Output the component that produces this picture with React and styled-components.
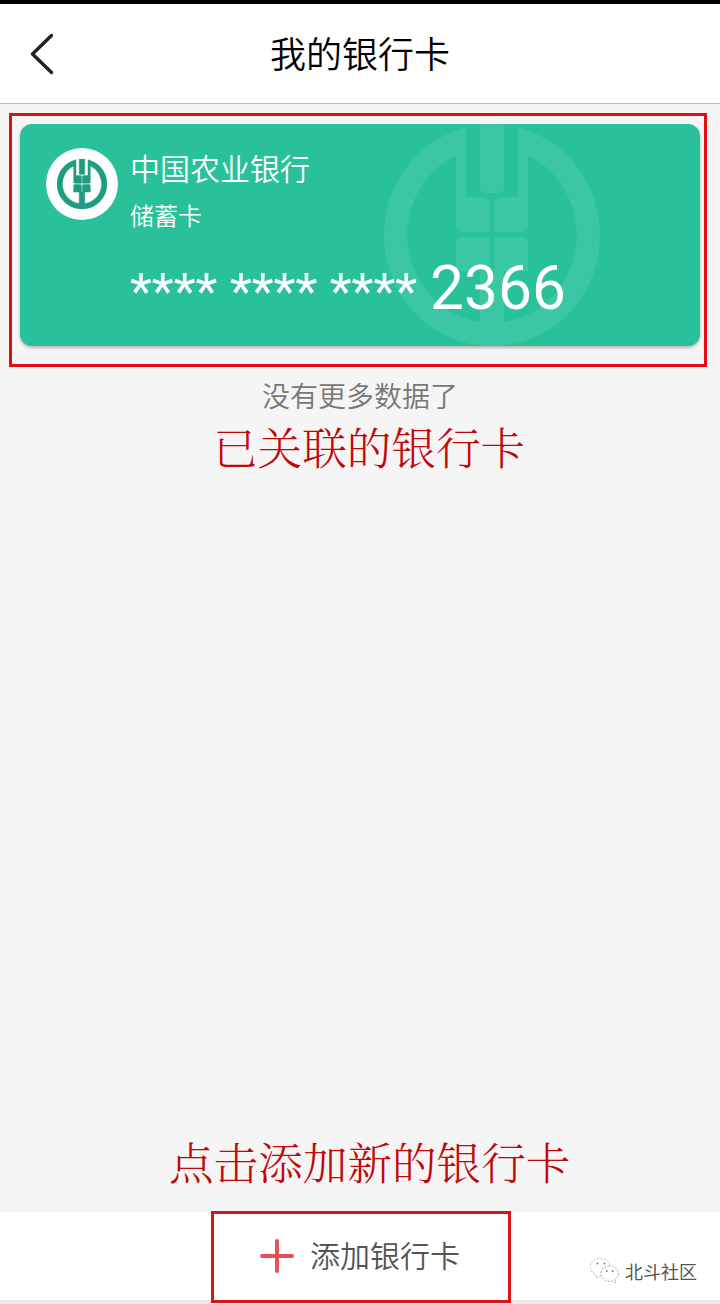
import React from "react";
import styled, { createGlobalStyle } from "styled-components";

const addLabel = "添加银行卡";

const cards = [
  {
    id: 1,
    bank: "中国农业银行",
    type: "储蓄卡",
    mask: "**** **** ****",
    last: "2366",
  },
];

const BackIcon = () => (
  <svg width="24" height="42" viewBox="0 0 24 42" fill="none">
    <path
      d="M21.5 2.5L2.5 21L21.5 39.5"
      stroke="#222"
      strokeWidth="3.4"
      strokeLinecap="round"
      strokeLinejoin="round"
    />
  </svg>
);

const PlusIcon = () => (
  <svg width="34" height="34" viewBox="0 0 34 34" fill="none">
    <path
      d="M17 2V32M2 17H32"
      stroke="#e5505a"
      strokeWidth="4"
      strokeLinecap="round"
    />
  </svg>
);

// 216 x 222, the wheat ear inside a ring
const BankMark = ({ className }) => (
  <svg
    className={className}
    viewBox="0 0 216 222"
    preserveAspectRatio="none"
    fill="currentColor"
  >
    <path d="M82 3.4A108 111 0 1 0 134 3.4V73H118Q110 73 110 79V108H138Q144 108 144 103V31.5A85.5 88 0 0 1 120 198V147H144V118Q144 113 138 113H114Q110 113 110 117V147H106V117Q106 113 102 113H78Q72 113 72 118V147H96V198A85.5 88 0 0 1 72 31.5V103Q72 108 78 108H106V79Q106 73 98 73H82Z" />
    <path d="M96 0H120V64Q120 69 115 69H101Q96 69 96 64Z" />
  </svg>
);

const WechatIcon = () => (
  <svg width="30" height="26" viewBox="0 0 30 26" fill="none">
    <g stroke="#9a9a9a" strokeWidth="0.9" strokeDasharray="2 1.4">
      <path d="M11 18L6 20V16.5A10 8.5 0 1 1 20 7.5" strokeOpacity="0.75" />
      <path d="M19.5 8A8.5 7.7 0 1 0 22 23L26 24.5L25.5 21.5A8.5 7.7 0 0 0 19.5 8Z" />
    </g>
    <g fill="#777">
      <circle cx="7.5" cy="5.5" r="0.9" />
      <circle cx="14.5" cy="5.5" r="0.9" />
      <circle cx="16.8" cy="13" r="0.9" />
      <circle cx="22.8" cy="13" r="0.9" />
    </g>
  </svg>
);

const BankCard = ({ bank, type, mask, last }) => (
  <Card>
    <Watermark />
    <Badge>
      <BadgeMark />
    </Badge>
    <Info>
      <BankName>{bank}</BankName>
      <CardType>{type}</CardType>
      <CardNumber>
        <Mask>{mask}</Mask>
        <Last>{last}</Last>
      </CardNumber>
    </Info>
  </Card>
);

const App = () => {
  return (
    <Page>
      <GlobalStyle />
      <StatusBar />
      <Header>
        <BackButton aria-label="返回">
          <BackIcon />
        </BackButton>
        <Title>我的银行卡</Title>
      </Header>
      <Content>
        <Highlight>
          {cards.map((card) => (
            <BankCard key={card.id} {...card} />
          ))}
        </Highlight>
        <NoMore>没有更多数据了</NoMore>
        <Note $left={213}>已关联的银行卡</Note>
        <Spacer />
        <Note $left={169} $bottom>
          点击添加新的银行卡
        </Note>
      </Content>
      <Footer>
        <AddButton>
          <PlusIcon />
          <AddLabel>{addLabel}</AddLabel>
        </AddButton>
        <Account>
          <WechatIcon />
          北斗社区
        </Account>
      </Footer>
    </Page>
  );
};

const GlobalStyle = createGlobalStyle`
  * {
    box-sizing: border-box;
  }
  body {
    margin: 0;
    background: #f5f5f5;
    font-family: Roboto, "Noto Sans CJK SC", sans-serif;
  }
  button {
    border: none;
    padding: 0;
    background: none;
    font: inherit;
  }
  h1, p {
    margin: 0;
    font-weight: 350;
  }
  svg {
    display: block;
    flex-shrink: 0;
  }
`;

const Page = styled.div`
  width: 720px;
  height: 1304px;
  display: flex;
  flex-direction: column;
  overflow: hidden;
  background: #f5f5f5;
`;

const StatusBar = styled.div`
  height: 4px;
  background: #000;
`;

const Header = styled.header`
  height: 100px;
  display: grid;
  grid-template-columns: 90px 1fr 90px;
  align-items: center;
  background: #fff;
  border-bottom: 1px solid #b8b8b8;
`;

const BackButton = styled.button`
  padding-left: 30px;
`;

const Title = styled.h1`
  padding-top: 4px;
  font-size: 36px;
  line-height: 52px;
  text-align: center;
  color: #000;
`;

const Content = styled.main`
  flex: 1;
  display: flex;
  flex-direction: column;
  padding-top: 9px;
`;

const Highlight = styled.section`
  width: 698px;
  height: 254px;
  margin-left: 9px;
  padding: 8px;
  border: 3px solid #e10f12;
`;

const Card = styled.article`
  position: relative;
  width: 680px;
  height: 222px;
  display: flex;
  gap: 12px;
  padding: 24px 26px 0;
  border-radius: 12px;
  overflow: hidden;
  background: #29c19a;
  color: #fff;
  box-shadow: 0 2px 3px rgba(0, 0, 0, 0.25);
`;

const Watermark = styled(BankMark)`
  position: absolute;
  top: 0;
  left: 364px;
  width: 216px;
  height: 222px;
  color: #3bc7a3;
`;

const Badge = styled.div`
  width: 72px;
  height: 72px;
  display: grid;
  place-items: center;
  flex-shrink: 0;
  border-radius: 50%;
  background: #fff;
`;

const BadgeMark = styled(BankMark)`
  width: 50px;
  height: 50px;
  color: #1f9c82;
  stroke: currentColor;
  stroke-width: 2px;
`;

const Info = styled.div`
  position: relative;
`;

const BankName = styled.p`
  font-size: 30px;
  line-height: 44px;
`;

const CardType = styled.p`
  font-size: 24px;
  line-height: 36px;
  margin-top: 7px;
`;

const CardNumber = styled.div`
  display: flex;
  align-items: baseline;
  gap: 13px;
  margin-top: 18px;
  white-space: pre;
`;

const Mask = styled.span`
  font-size: 50.7px;
  line-height: 72px;
`;

const Last = styled.span`
  font-size: 60.4px;
  line-height: 72px;
`;

const NoMore = styled.p`
  margin-top: 10px;
  font-size: 28px;
  line-height: 42px;
  text-align: center;
  color: #777;
`;

const Note = styled.p`
  margin-top: -5px;
  padding-left: ${(props) => props.$left}px;
  margin-bottom: ${(props) => (props.$bottom ? "19px" : 0)};
  font-family: "Noto Serif CJK SC", "Songti SC", SimSun, "Noto Sans CJK SC", serif;
  font-size: 44.6px;
  font-weight: 300;
  line-height: 64px;
  white-space: nowrap;
  color: #c00808;
`;

const Spacer = styled.div`
  flex: 1;
`;

const Footer = styled.footer`
  height: 92px;
  display: grid;
  grid-template-columns: 211px 300px 1fr;
  background: linear-gradient(#fff 88px, #ebebeb 88px);
`;

const AddButton = styled.button`
  grid-column: 2;
  height: 92px;
  margin-top: -1px;
  display: flex;
  align-items: center;
  gap: 16px;
  padding: 0 0 3px 46px;
  border: 3px solid #dc1418;
  font-size: 30px;
  color: #555;
`;

const AddLabel = styled.span`
  padding-bottom: 3px;
  font-weight: 350;
`;

const Account = styled.div`
  display: flex;
  align-items: center;
  gap: 5px;
  height: 34px;
  margin: 42px 0 0 79px;
  font-size: 18px;
  color: #555;
`;

export default App;
